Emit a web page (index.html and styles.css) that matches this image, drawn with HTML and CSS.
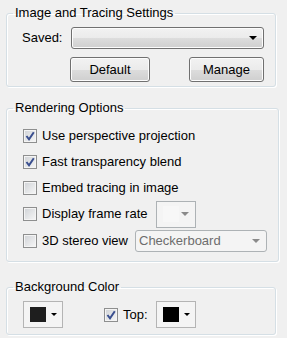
FILE: index.html
```html
<!doctype html>
<html lang="en">
    <head>
        <meta charset="UTF-8" />
        <title>Display Settings</title>
        <link rel="stylesheet" href="styles.css">
    </head>
    <body>
        <div class="panel">
            <fieldset class="group group-image">
                <legend>Image and Tracing Settings</legend>
                <div class="saved-row">
                    <span class="saved-label">Saved:</span>
                    <div class="combo combo-saved">
                        <span class="combo-text"></span>
                        <span class="arrow"></span>
                    </div>
                </div>
                <div class="button-row">
                    <button class="button button-default">Default</button>
                    <button class="button button-manage">Manage</button>
                </div>
            </fieldset>

            <fieldset class="group group-render">
                <legend>Rendering Options</legend>
                <label class="check-row">
                    <span class="box checked"></span>
                    <span>Use perspective projection</span>
                </label>
                <label class="check-row">
                    <span class="box checked"></span>
                    <span>Fast transparency blend</span>
                </label>
                <label class="check-row">
                    <span class="box"></span>
                    <span>Embed tracing in image</span>
                </label>
                <div class="check-row rate-row">
                    <label class="check rate-check">
                        <span class="box"></span>
                        <span>Display frame rate</span>
                    </label>
                    <div class="combo combo-rate disabled">
                        <span class="swatch-empty"></span>
                        <span class="arrow"></span>
                    </div>
                </div>
                <div class="check-row stereo-row">
                    <label class="check stereo-check">
                        <span class="box"></span>
                        <span>3D stereo view</span>
                    </label>
                    <div class="combo combo-stereo disabled">
                        <span class="combo-text">Checkerboard</span>
                        <span class="arrow"></span>
                    </div>
                </div>
            </fieldset>

            <fieldset class="group group-bg">
                <legend>Background Color</legend>
                <div class="color-row">
                    <button class="color-button">
                        <span class="swatch swatch-dark"></span>
                        <span class="arrow arrow-small"></span>
                    </button>
                    <label class="check top-check">
                        <span class="box checked"></span>
                        <span>Top:</span>
                    </label>
                    <button class="color-button">
                        <span class="swatch swatch-black"></span>
                        <span class="arrow arrow-small"></span>
                    </button>
                </div>
            </fieldset>
        </div>
    </body>
</html>
```

FILE: styles.css
```css
* {
    margin: 0;
    padding: 0;
    box-sizing: border-box;
}
body {
    font-family: "Liberation Sans", Arial, sans-serif;
    font-size: 13px;
    line-height: 16px;
    color: #000000;
    background-color: #f0f0f0;
    width: 287px;
    height: 338px;
    overflow: hidden;
}
.panel {
    padding: 5px 0 0 6px;
}
.group {
    width: 270px;
    border: 1px solid #d5dfe5;
    border-radius: 3px;
    box-shadow: inset 1px 1px 0 #ffffff, 1px 1px 0 #ffffff;
    padding: 0 11px 0 0;
}
.group legend {
    margin-left: 6px;
    padding: 0 2px;
    line-height: 16px;
}
.group-image {
    padding-top: 6px;
    padding-bottom: 4px;
}
.group-render {
    margin-top: 13px;
    padding-top: 7px;
    padding-bottom: 6px;
}
.group-bg {
    margin-top: 17px;
    padding-top: 6px;
    padding-bottom: 6px;
}

/* combo boxes */
.combo {
    display: flex;
    align-items: center;
    justify-content: space-between;
    border: 1px solid #707070;
    border-radius: 3px;
    background: linear-gradient(#f2f2f2 0%, #ebebeb 50%, #dddddd 50%, #cfcfcf 100%);
    box-shadow: inset 0 0 0 1px #fcfcfc;
}
.arrow {
    width: 0;
    height: 0;
    border-left: 4px solid transparent;
    border-right: 4px solid transparent;
    border-top: 4px solid #000000;
}
.combo.disabled {
    border-color: #adb2b5;
    background: #f4f4f4;
    box-shadow: none;
}
.combo.disabled .arrow {
    border-top-color: #8a8a8a;
}
.saved-row {
    display: flex;
    align-items: center;
    padding-left: 15px;
}
.saved-label {
    width: 49px;
}
.combo-saved {
    width: 193px;
    height: 22px;
    padding: 0 6px 0 4px;
}
.combo-rate {
    width: 40px;
    height: 27px;
    padding: 0 6px 0 6px;
    border-radius: 0;
}
.swatch-empty {
    width: 16px;
    height: 16px;
    background: #f7f7f7;
}
.combo-stereo {
    width: 132px;
    height: 22px;
    padding: 0 6px 0 3px;
    color: #6d6d6d;
}

/* push buttons */
.button-row {
    display: flex;
    margin-top: 8px;
    padding-left: 63px;
}
.button {
    font: inherit;
    color: #000000;
    height: 25px;
    border: 1px solid #707070;
    border-radius: 3px;
    background: linear-gradient(#f2f2f2 0%, #ebebeb 50%, #dddddd 50%, #cfcfcf 100%);
    box-shadow: inset 0 0 0 1px #fcfcfc;
}
.button-default {
    width: 80px;
}
.button-manage {
    width: 75px;
    margin-left: auto;
}

/* check boxes */
.check-row,
.check {
    display: flex;
    align-items: center;
}
.check-row {
    height: 26px;
    padding-left: 16px;
}
.box {
    width: 14px;
    height: 14px;
    margin-right: 5px;
    border: 1px solid #8e8f8f;
    background: linear-gradient(135deg, #cfd2d6, #f7f7f7);
    box-shadow: inset 0 0 0 1px #f4f4f4;
    display: flex;
    align-items: center;
    justify-content: center;
}
.box.checked::after {
    content: "";
    width: 10px;
    height: 10px;
    background: no-repeat center / 10px 10px url("data:image/svg+xml;utf8,<svg xmlns='http://www.w3.org/2000/svg' viewBox='0 0 10 10'><path d='M1.5 5 L4 8.3 L8.8 1.2' fill='none' stroke='%233a4f8f' stroke-width='2'/></svg>");
}
.rate-check {
    width: 133px;
}
.rate-row {
    height: 26px;
}
.stereo-row {
    height: 28px;
}
.stereo-check {
    width: 112px;
}

/* colour pickers */
.color-row {
    display: flex;
    align-items: center;
    padding-left: 16px;
}
.color-button {
    width: 40px;
    height: 27px;
    display: flex;
    align-items: center;
    padding: 0 5px 0 6px;
    justify-content: space-between;
    border: 1px solid #b4b4b4;
    background: #f4f4f4;
}
.swatch {
    width: 16px;
    height: 15px;
}
.swatch-dark {
    background: #1e1e1e;
}
.swatch-black {
    background: #000000;
}
.arrow-small {
    border-left-width: 3px;
    border-right-width: 3px;
    border-top-width: 3px;
}
.top-check {
    width: 52px;
    margin-left: 41px;
}
```
